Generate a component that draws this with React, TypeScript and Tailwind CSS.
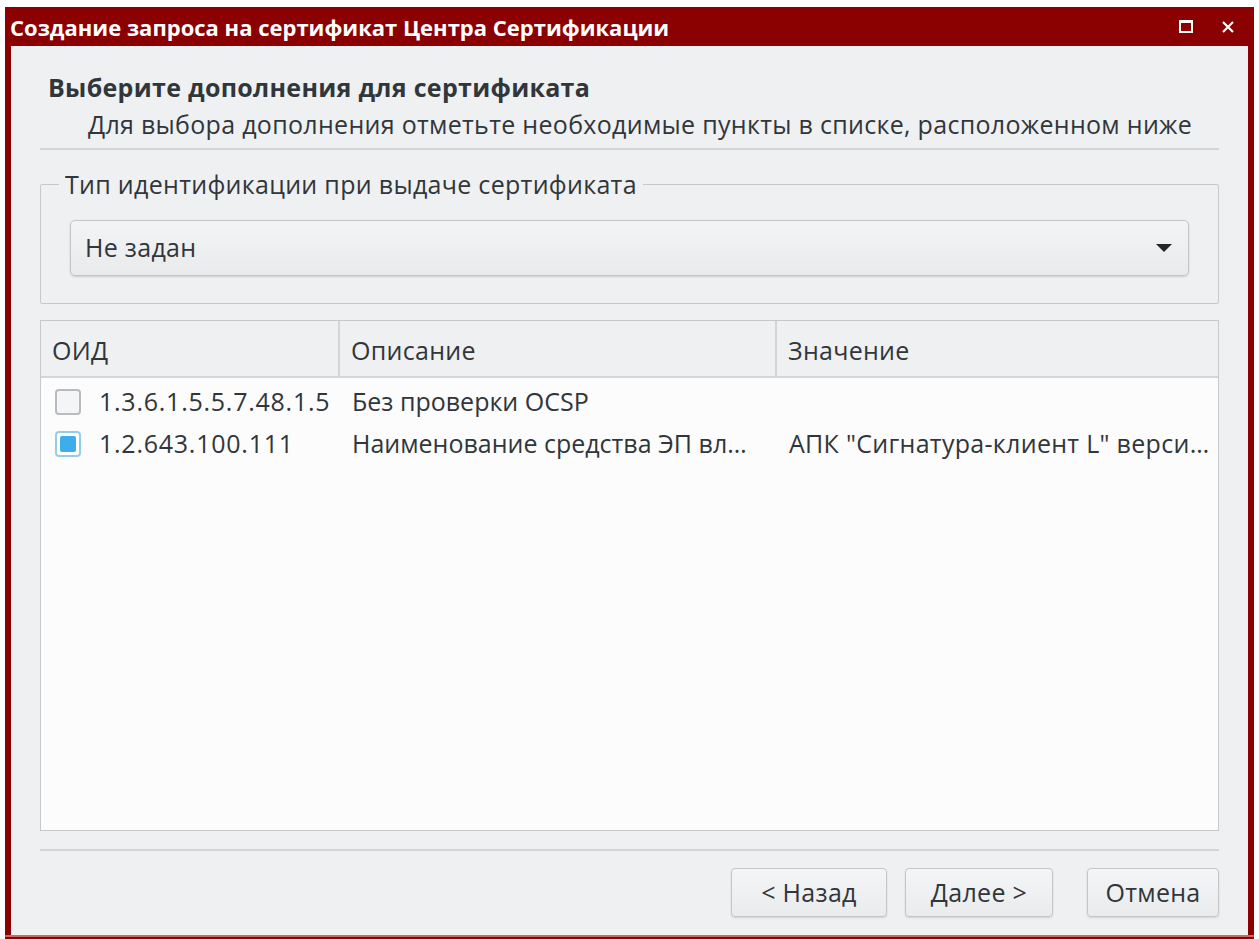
import React from "react";

type Ext = { oid: string; desc: string; value: string; checked: boolean };

const extensions: Ext[] = [
    { oid: "1.3.6.1.5.5.7.48.1.5", desc: "Без проверки OCSP", value: "", checked: false },
    { oid: "1.2.643.100.111", desc: "Наименование средства ЭП вл…", value: "АПК \"Сигнатура-клиент L\" верси…", checked: true },
];

const Checkbox: React.FC<{ checked: boolean }> = ({ checked }) => (
    <div className={"w-[26px] h-[26px] rounded-[4px] border-2 flex items-center justify-center shrink-0 " + (checked ? "border-[#93cee9] bg-white" : "border-[#b9bbbe] bg-[#f4f5f6]")}>
        {checked && <div className="w-[16px] h-[16px] rounded-[2px] bg-[#3daee9]"></div>}
    </div>
);

const Button: React.FC<{ label: string; width: string }> = ({ label, width }) => (
    <button className={"h-[49px] rounded-[4px] border border-[#c3c5c8] bg-gradient-to-b from-[#f4f5f6] to-[#eaebec] shadow-[0_1px_2px_rgba(0,0,0,0.12)] text-[25px] leading-none text-[#31363b] " + width}>
        {label}
    </button>
);

const App: React.FC = () => {
    return (
        <div className="w-[1259px] h-[939px] bg-white pt-[7px] px-[5px] flex flex-col" style={{ fontFamily: "'Open Sans', 'Noto Sans', sans-serif" }}>
            <div className="flex-1 flex flex-col bg-[#8b0000] px-[6px] pb-[2px]">
                {/* title bar */}
                <div className="h-[39px] flex items-center justify-between shrink-0">
                    <p className="text-[22px] font-bold text-white leading-none -ml-[1px]">Создание запроса на сертификат Центра Сертификации</p>
                    <div className="flex items-center gap-[28px] pr-[13px]">
                        <div className="w-[14px] h-[13px] border-2 border-t-[3px] border-white"></div>
                        <svg width="14" height="14" viewBox="0 0 14 14"><path d="M2 2 L12 12 M12 2 L2 12" stroke="white" strokeWidth="2.2" /></svg>
                    </div>
                </div>
                {/* dialog body */}
                <div className="flex-1 flex flex-col bg-[#eff0f1] px-[29px] text-[#31363b] text-[25px] tracking-[0.3px]">
                    <div className="pl-[8px] pt-[26px]">
                        <p className="font-bold leading-[30px]">Выберите дополнения для сертификата</p>
                        <p className="leading-[30px] pl-[40px] pt-[7px]">Для выбора дополнения отметьте необходимые пункты в списке, расположенном ниже</p>
                    </div>
                    <div className="h-[2px] bg-[#d3d5d7] mt-[9px]"></div>

                    {/* identification type group */}
                    <div className="mt-[34px] h-[120px] border border-[#c6c8ca] rounded-[2px] relative px-[29px] pt-[35px]">
                        <span className="absolute left-[18px] -top-[17px] bg-[#eff0f1] px-[6px] leading-[32px]">Тип идентификации при выдаче сертификата</span>
                        <div className="h-[56px] rounded-[5px] border border-[#c3c5c8] bg-gradient-to-b from-[#f3f4f5] to-[#e9eaeb] shadow-[0_1px_2px_rgba(0,0,0,0.15)] flex items-center justify-between pl-[14px] pr-[15px]">
                            <span>Не задан</span>
                            <svg width="18" height="10" viewBox="0 0 18 10"><path d="M1 1 L17 1 L9 9 Z" fill="#232629" /></svg>
                        </div>
                    </div>

                    {/* extensions table */}
                    <div className="mt-[16px] h-[511px] border border-[#c6c8ca] bg-[#fcfcfc] flex flex-col">
                        <div className="h-[57px] bg-[#eff0f1] border-b-2 border-[#d3d5d7] flex shrink-0">
                            <div className="w-[299px] border-r-2 border-[#d3d5d7] flex items-center pl-[11px] pt-[4px]">ОИД</div>
                            <div className="w-[437px] border-r-2 border-[#d3d5d7] flex items-center pl-[11px] pt-[4px]">Описание</div>
                            <div className="flex-1 flex items-center pl-[11px] pt-[4px]">Значение</div>
                        </div>
                        <div className="flex flex-col pt-[3px]">
                            {extensions.map((ext) => (
                                <div key={ext.oid} className="h-[42px] flex items-center">
                                    <div className="w-[299px] flex items-center gap-[18px] pl-[14px] shrink-0">
                                        <Checkbox checked={ext.checked} />
                                        <span className="tracking-[0.75px]">{ext.oid}</span>
                                    </div>
                                    <div className="w-[437px] pl-[12px] shrink-0 whitespace-nowrap tracking-normal">{ext.desc}</div>
                                    <div className="flex-1 pl-[12px] whitespace-nowrap">{ext.value}</div>
                                </div>
                            ))}
                        </div>
                    </div>

                    <div className="h-[2px] bg-[#d3d5d7] mt-[18px]"></div>

                    {/* wizard buttons */}
                    <div className="flex justify-end gap-[18px] mt-[17px]">
                        <Button label="< Назад" width="w-[156px]" />
                        <Button label="Далее >" width="w-[148px]" />
                        <div className="w-[132px] ml-[16px] flex"><Button label="Отмена" width="w-[132px]" /></div>
                    </div>
                </div>
                <div className="h-[2px] bg-[#c46868] -mx-[6px]"></div>
            </div>
        </div>
    );
};

export default App;
